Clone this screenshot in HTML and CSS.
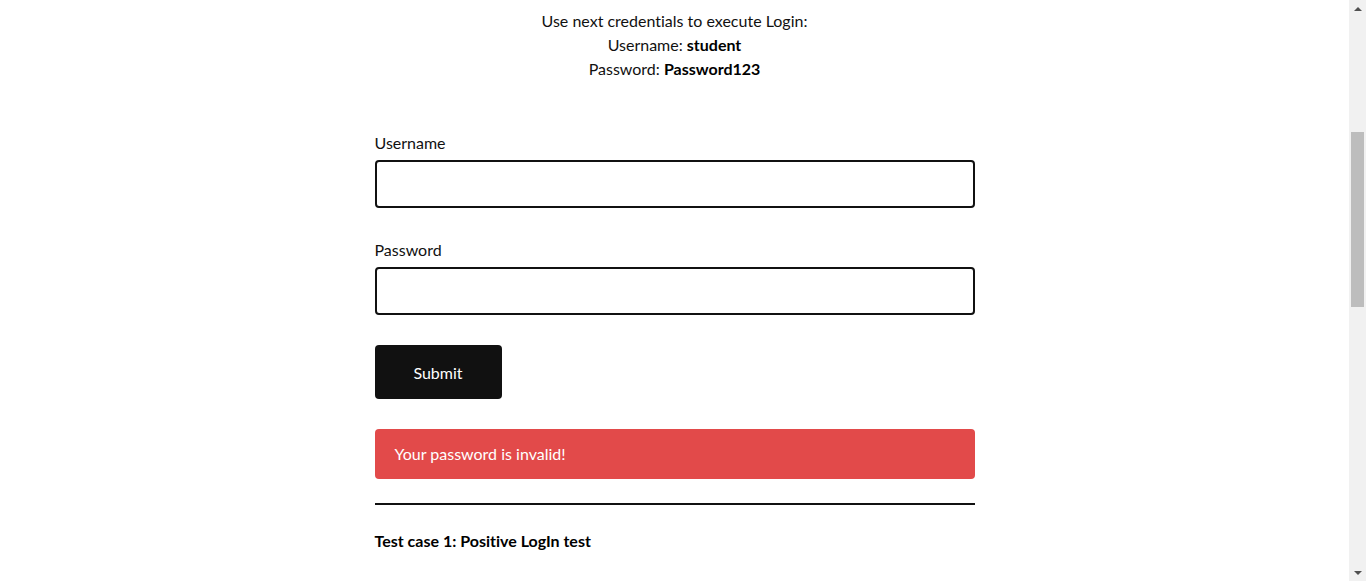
FILE: index.html
```html
<!DOCTYPE html>
<html lang="en">
<head>
<meta charset="utf-8">
<title>Test Login | Practice Test Automation</title>
<link rel="stylesheet" href="styles.css">
</head>
<body>
<div class="viewport">
<div class="page" id="page">
<header class="site-header">
  <div class="header-inner">
    <a class="logo" href="#">Practice <b>Test Automation</b></a>
    <nav class="menu">
      <a href="#">Home</a>
      <a href="#">Practice</a>
      <a href="#">Courses</a>
      <a href="#">Blog</a>
      <a href="#">Contact</a>
    </nav>
  </div>
</header>

<main class="content">
  <section class="intro">
    <h1>Test login</h1>
    <p>This is a simple Login page. Students can use this page to practice writing simple positive and negative LogIn tests. Login functionality is something that most of the test automation engineers need to automate.</p>
  </section>

  <section class="login-box">
    <p class="credentials" id="credentials">Use next credentials to execute Login:<br>Username: <b>student</b><br>Password: <b>Password123</b></p>

    <div class="login-form">
      <div class="field">
        <label for="username">Username</label>
        <input id="username" type="text">
      </div>
      <div class="field">
        <label for="password">Password</label>
        <input id="password" type="password">
      </div>
      <button class="submit" type="button">Submit</button>
      <div class="error">Your password is invalid!</div>
    </div>

    <hr class="divider">

    <div class="cases">
      <h5>Test case 1: Positive LogIn test</h5>
      <ol>
        <li>Open page</li>
        <li>Type username <b>student</b> into Username field</li>
        <li>Type password <b>Password123</b> into Password field</li>
        <li>Push Submit button</li>
        <li>Verify new page URL contains <b>practicetestautomation.com/logged-in-successfully/</b></li>
        <li>Verify new page contains expected text ('Congratulations' or 'successfully logged in')</li>
        <li>Verify button <b>Log out</b> is displayed on the new page</li>
      </ol>
      <h5>Test case 2: Negative username test</h5>
      <ol>
        <li>Open page</li>
        <li>Type username <b>incorrectUser</b> into Username field.</li>
        <li>Type password <b>Password123</b> into Password field</li>
        <li>Push Submit button</li>
        <li>Verify error message is displayed</li>
        <li>Verify error message text is <b>Your username is invalid!</b></li>
      </ol>
      <h5>Test case 3: Negative password test</h5>
      <ol>
        <li>Open page</li>
        <li>Type username <b>student</b> into Username field</li>
        <li>Type password <b>incorrectPassword</b> into Password field</li>
        <li>Push Submit button</li>
        <li>Verify error message is displayed</li>
        <li>Verify error message text is <b>Your password is invalid!</b></li>
      </ol>
    </div>
  </section>
</main>

<footer class="site-footer">
  <p>© Copyright 2024 Practice Test Automation</p>
</footer>
</div>
<div class="scrollbar" aria-hidden="true">
  <div class="sb-button"><span class="arrow-up"></span></div>
  <div class="sb-track"><div class="sb-thumb" id="thumb"></div></div>
  <div class="sb-button"><span class="arrow-down"></span></div>
</div>
</div>
<script src="script.js"></script>
</body>
</html>
```

FILE: styles.css
```css
html,
body {
  margin: 0;
  height: 100%;
  overflow: hidden;
}

body {
  font-family: Lato, "Open Sans", Arial, sans-serif;
  font-size: 16px;
  line-height: 24px;
  font-variant-ligatures: no-common-ligatures;
  color: #111;
  background: #fff;
}

.viewport {
  display: flex;
  height: 100vh;
}

.page {
  flex: 1;
  min-width: 0;
  height: 100%;
  overflow-y: auto;
  scrollbar-width: none;
}

.page::-webkit-scrollbar {
  display: none;
}

/* scrollbar */
.scrollbar {
  width: 17px;
  flex: none;
  display: flex;
  flex-direction: column;
  background: #f1f1f1;
}

.sb-button {
  height: 17px;
  flex: none;
  display: flex;
  align-items: center;
  justify-content: center;
}

.arrow-up {
  width: 0;
  height: 0;
  border-left: 4px solid transparent;
  border-right: 4px solid transparent;
  border-bottom: 4px solid #505050;
}

.arrow-down {
  width: 0;
  height: 0;
  border-left: 4px solid transparent;
  border-right: 4px solid transparent;
  border-top: 4px solid #505050;
}

.sb-track {
  flex: 1;
  display: flex;
  flex-direction: column;
  align-items: center;
}

.sb-thumb {
  width: 13px;
  height: 175px;
  margin-top: 115px;
  background: #bdbdbd;
}

/* header */
.site-header {
  height: 80px;
  border-bottom: 1px solid #e5e5e5;
}

.header-inner {
  max-width: 1100px;
  margin: 0 auto;
  height: 100%;
  display: flex;
  align-items: center;
  justify-content: space-between;
  padding: 0 20px;
}

.logo {
  color: #111;
  text-decoration: none;
  font-size: 20px;
}

.menu {
  display: flex;
  gap: 28px;
}

.menu a {
  color: #111;
  text-decoration: none;
  font-size: 15px;
  text-transform: uppercase;
}

.content {
  width: 600px;
  margin: 0 auto;
}

.intro {
  box-sizing: border-box;
  padding-top: 60px;
  height: 310px;
}

.intro h1 {
  margin: 0 0 30px;
  font-size: 48px;
  line-height: 56px;
  font-weight: 700;
}

.intro p {
  margin: 0;
}

.credentials {
  margin: 0 0 50px;
  text-align: center;
  color: #111;
}

.credentials b {
  color: #000;
}

.login-form {
  display: flex;
  flex-direction: column;
  align-items: flex-start;
}

.field {
  width: 100%;
  display: flex;
  flex-direction: column;
  margin-bottom: 30px;
}

.field label {
  margin-bottom: 5px;
  color: #111;
}

.field input {
  box-sizing: border-box;
  width: 100%;
  height: 48px;
  margin: 0;
  border: 2px solid #111;
  border-radius: 4px;
  background: #fff;
  font: inherit;
  padding: 0 12px;
  outline: none;
}

.submit {
  width: 127px;
  height: 54px;
  margin: 0 0 30px;
  border: 0;
  border-radius: 4px;
  background: #111;
  color: #fff;
  font-family: Lato, Arial, sans-serif;
  font-size: 16px;
  cursor: pointer;
}

.error {
  box-sizing: border-box;
  width: 100%;
  height: 50px;
  padding: 0 20px;
  display: flex;
  align-items: center;
  background: #e24a4a;
  color: #fff;
  border-radius: 4px;
}

.divider {
  margin: 24px 0 24px;
  border: 0;
  border-top: 2px solid #111;
  height: 0;
}

.cases h5 {
  margin: 0 0 36px;
  font-size: 16px;
  line-height: 24px;
  font-weight: 700;
  color: #000;
}

.cases ol {
  margin: 0 0 40px;
  padding-left: 24px;
}

.site-footer {
  padding: 40px 0;
  text-align: center;
  background: #f7f7f7;
  font-size: 14px;
}

.site-footer p {
  margin: 0;
}
```

FILE: script.js
```js
window.addEventListener('load', function () {
  var page = document.getElementById('page');
  var el = document.getElementById('credentials');
  var top = el.getBoundingClientRect().top - page.getBoundingClientRect().top + page.scrollTop;
  page.scrollTop = top - 9;

  var thumb = document.getElementById('thumb');
  var track = thumb.parentNode.clientHeight;
  var ratio = page.clientHeight / page.scrollHeight;
  var h = Math.max(20, Math.round(track * ratio));
  thumb.style.height = h + 'px';
  thumb.style.marginTop = Math.round(page.scrollTop / page.scrollHeight * track) + 'px';
});
```
